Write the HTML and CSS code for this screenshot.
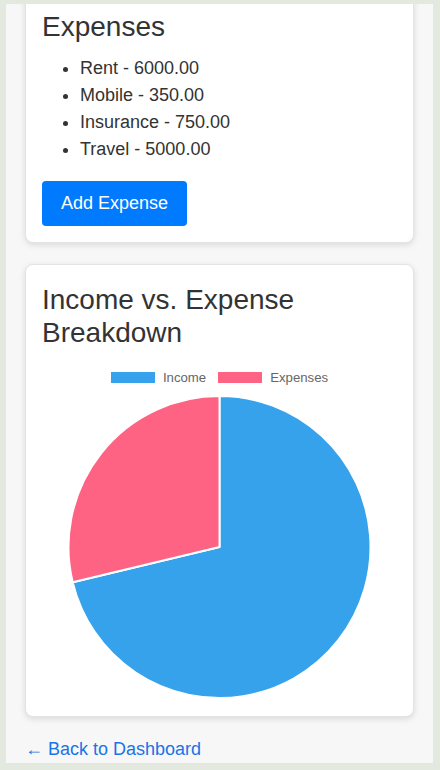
FILE: index.html
```html
<!DOCTYPE html>
<html lang="en">
<head>
<meta charset="utf-8">
<title>Expenses</title>
<link rel="stylesheet" href="styles.css">
</head>
<body>
<div class="page">
  <section class="card card-first">
    <h2 class="card-title">Expenses</h2>
    <ul class="expense-list">
      <li>Rent - 6000.00</li>
      <li>Mobile - 350.00</li>
      <li>Insurance - 750.00</li>
      <li>Travel - 5000.00</li>
    </ul>
    <button class="btn-primary" type="button">Add Expense</button>
  </section>

  <section class="card">
    <h2 class="card-title">Income vs. Expense Breakdown</h2>
    <div class="chart">
      <div class="legend">
        <span class="legend-item"><span class="legend-box income"></span>Income</span>
        <span class="legend-item"><span class="legend-box expense"></span>Expenses</span>
      </div>
      <svg class="pie" width="355" height="306" viewBox="0 0 355 306">
        <path d="M177.5 153 L177.5 2 A151 151 0 1 1 30.67 188.25 Z" fill="#36a2eb" stroke="#fff" stroke-width="2" stroke-linejoin="round"/>
        <path d="M177.5 153 L30.67 188.25 A151 151 0 0 1 177.5 2 Z" fill="#ff6384" stroke="#fff" stroke-width="2" stroke-linejoin="round"/>
      </svg>
    </div>
  </section>

  <a class="back-link" href="#">← Back to Dashboard</a>
</div>
</body>
</html>
```

FILE: styles.css
```css
html, body {
  margin: 0;
  padding: 0;
}

body {
  background: #e3e9de;
  height: 770px;
  overflow: hidden;
  padding: 4px 7px 0 6px;
  box-sizing: border-box;
  font-family: "Liberation Sans", Arial, Helvetica, sans-serif;
  font-size: 18px;
  line-height: 1.5;
  color: #333;
}

.page {
  background: #f7f7f7;
  height: 759px;
  overflow: hidden;
  padding: 0 19px;
  display: flex;
  flex-direction: column;
}

.card {
  background: #fff;
  border: 1px solid #e4e4e4;
  border-radius: 8px;
  box-shadow: 0 2px 6px rgba(0, 0, 0, 0.12);
  padding: 18px 16px 16px;
  margin-bottom: 21px;
}

.card-first {
  margin-top: -13px;
  border-top-left-radius: 0;
  border-top-right-radius: 0;
}

.card-title {
  margin: 0 0 11px;
  font-size: 28px;
  font-weight: normal;
  line-height: 1.2;
  color: #333;
}

.expense-list {
  margin: 0 0 18px;
  padding-left: 38px;
}

.btn-primary {
  display: block;
  background: #007bff;
  color: #fff;
  border: none;
  border-radius: 4px;
  font-family: inherit;
  font-size: 18px;
  line-height: 27px;
  padding: 9px 19px;
  cursor: pointer;
}

.chart {
  display: flex;
  flex-direction: column;
}

.legend {
  height: 33px;
  display: flex;
  justify-content: center;
  align-items: center;
  gap: 12px;
  font-family: "Liberation Sans", Helvetica, Arial, sans-serif;
  font-size: 13.2px;
  line-height: 1;
  color: #666;
}

.legend-item {
  display: flex;
  align-items: center;
  gap: 8px;
}

.legend-box {
  width: 44px;
  height: 11px;
}

.legend-box.income {
  background: #36a2eb;
}

.legend-box.expense {
  background: #ff6384;
}

.pie {
  display: block;
}

.back-link {
  color: #1a73e8;
  text-decoration: none;
  font-size: 18px;
  line-height: 27px;
  margin-top: -2px;
}
```
